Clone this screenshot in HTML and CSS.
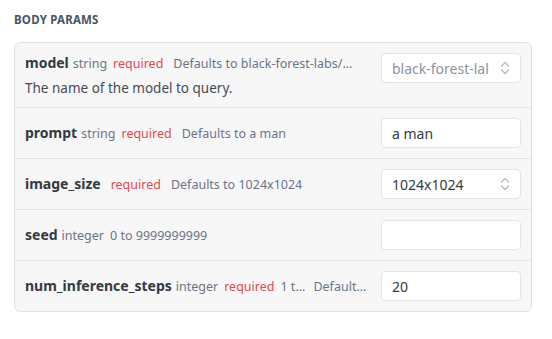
FILE: index.html
```html
<!DOCTYPE html>
<html>
  <head>
    <title>Body Params</title>
    <meta charset="UTF-8">
    <link rel="stylesheet" href="styles.css">
  </head>

  <body>
    <div class="section-title">Body Params</div>
    <div class="params">
      <div class="param">
        <div class="param-info">
          <div class="param-head">
            <span class="name">model</span>
            <span class="type">string</span>
            <span class="req">required</span>
            <span class="meta">Defaults to black-forest-labs/...</span>
          </div>
          <div class="desc">The name of the model to query.</div>
        </div>
        <div class="field select disabled">
          <span class="value">black-forest-lal</span>
          <svg class="chev" width="10" height="14" viewBox="0 0 10 14"><path d="M1.5 5 L5 1.5 L8.5 5 M1.5 9 L5 12.5 L8.5 9" fill="none" stroke="currentColor" stroke-width="1.3" stroke-linecap="round" stroke-linejoin="round"/></svg>
        </div>
      </div>

      <div class="param">
        <div class="param-info">
          <div class="param-head">
            <span class="name">prompt</span>
            <span class="type">string</span>
            <span class="req">required</span>
            <span class="meta">Defaults to a man</span>
          </div>
        </div>
        <div class="field"><span class="value">a man</span></div>
      </div>

      <div class="param">
        <div class="param-info">
          <div class="param-head">
            <span class="name">image_size</span>
            <span class="req spaced">required</span>
            <span class="meta">Defaults to 1024x1024</span>
          </div>
        </div>
        <div class="field select">
          <span class="value">1024x1024</span>
          <svg class="chev" width="10" height="14" viewBox="0 0 10 14"><path d="M1.5 5 L5 1.5 L8.5 5 M1.5 9 L5 12.5 L8.5 9" fill="none" stroke="currentColor" stroke-width="1.3" stroke-linecap="round" stroke-linejoin="round"/></svg>
        </div>
      </div>

      <div class="param">
        <div class="param-info">
          <div class="param-head">
            <span class="name">seed</span>
            <span class="type">integer</span>
            <span class="range">0 to 9999999999</span>
          </div>
        </div>
        <div class="field"><span class="value"></span></div>
      </div>

      <div class="param">
        <div class="param-info">
          <div class="param-head">
            <span class="name">num_inference_steps</span>
            <span class="type">integer</span>
            <span class="req tight">required</span>
            <span class="range">1 t...</span>
            <span class="meta">Default...</span>
          </div>
        </div>
        <div class="field"><span class="value">20</span></div>
      </div>
    </div>
  </body>
</html>
```

FILE: styles.css
```css
body {
  font-family: "Segoe UI", "Noto Sans", sans-serif;
  margin: 0;
  padding: 12px 20px 20px 14px;
  background-color: #fff;
  color: #384250;
}

.section-title {
  font-size: 11.5px;
  font-weight: bold;
  text-transform: uppercase;
  color: #4b5565;
  letter-spacing: 0.2px;
  line-height: 16px;
  margin-bottom: 14px;
}

.params {
  border: 1px solid #e2e2e2;
  border-radius: 6px;
  background-color: #f7f7f7;
}

.param {
  display: flex;
  align-items: flex-start;
  padding: 10px 10px;
  border-bottom: 1px solid #e2e2e2;
}

.param:last-child {
  border-bottom: none;
}

.param-info {
  flex: 1;
  min-width: 0;
  padding-right: 12px;
}

.param-head {
  display: flex;
  align-items: baseline;
  height: 30px;
  line-height: 30px;
  white-space: nowrap;
}

.param:first-child .param-head {
  height: 20px;
  line-height: 20px;
}

.name {
  font-size: 14px;
  font-weight: bold;
  color: #333a44;
  margin-right: 4px;
}

.type {
  font-size: 12.5px;
  color: #6b7587;
  margin-right: 6px;
}

.req {
  font-size: 12.5px;
  color: #e5484d;
  margin-right: 10px;
}

.req.spaced {
  margin-left: 6px;
}

.req.tight {
  margin-right: 6px;
}

.range {
  font-size: 12.5px;
  color: #6b7587;
  margin-right: 8px;
}

.meta {
  font-size: 12.5px;
  color: #6b7587;
}

.desc {
  font-size: 13.5px;
  color: #464c55;
  margin-top: 6px;
  line-height: 18px;
}

.field {
  flex-shrink: 0;
  display: flex;
  align-items: center;
  padding: 0 10px;
  box-sizing: border-box;
  width: 140px;
  height: 30px;
  background-color: #fff;
  border: 1px solid #e4e4e4;
  border-radius: 4px;
  font-size: 14px;
  color: #333a44;
}

.field .value {
  flex: 1;
  overflow: hidden;
  white-space: nowrap;
}

.field.disabled {
  color: #8b93a1;
}

.chev {
  color: #b8bcc3;
  margin-left: 4px;
}
```
